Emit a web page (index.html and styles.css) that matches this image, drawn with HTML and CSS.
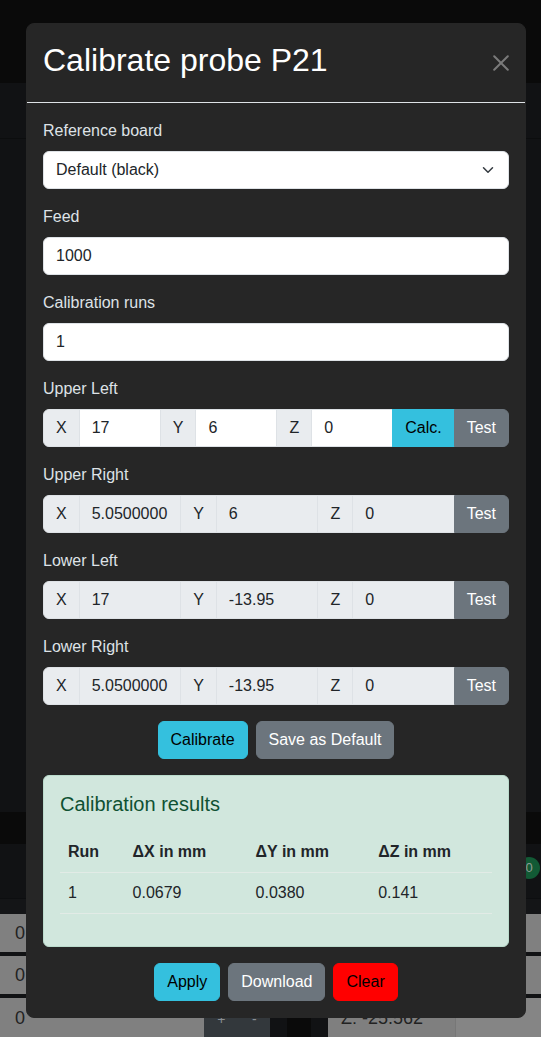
FILE: index.html
```html
<!DOCTYPE html>
<html lang="en">
<head>
<meta charset="utf-8">
<title>Calibrate probe P21</title>
<link rel="stylesheet" href="styles.css">
</head>
<body>
<div class="page">
  <div class="topbar"></div>
  <div class="navbar"></div>
  <div class="main"></div>
  <div class="band"></div>
  <div class="status"><span class="badge">0</span></div>
  <div class="sub"></div>
  <div class="rows">
    <div class="row"><span class="zero">0</span></div>
    <div class="row"><span class="zero">0</span></div>
    <div class="row row-last">
      <div class="cell-a"><span class="zero">0</span></div>
      <div class="pm"><span>+</span><span>-</span></div>
      <div class="gap"><div class="gap-inner"></div></div>
      <div class="zbox">Z: -25.562</div>
      <div class="cell-b"></div>
    </div>
  </div>
</div>

<div class="modal">
  <div class="dialog">
    <div class="mheader">
      <h5 class="mtitle">Calibrate probe P21</h5>
      <button class="close" type="button" aria-label="Close">
        <svg width="16" height="16" viewBox="0 0 16 16"><path d="M1.2 1.2 14.8 14.8M14.8 1.2 1.2 14.8" stroke="#7a7a7a" stroke-width="2" stroke-linecap="round" fill="none"/></svg>
      </button>
    </div>
    <div class="mbody">
      <div class="field">
        <label class="lbl">Reference board</label>
        <div class="select-wrap">
          <select class="ctl select"><option>Default (black)</option></select>
          <svg class="chev" width="12" height="12" viewBox="0 0 16 16"><path d="m2 5 6 6 6-6" fill="none" stroke="#343a40" stroke-width="2" stroke-linecap="round" stroke-linejoin="round"/></svg>
        </div>
      </div>
      <div class="field">
        <label class="lbl">Feed</label>
        <input class="ctl" value="1000">
      </div>
      <div class="field">
        <label class="lbl">Calibration runs</label>
        <input class="ctl" value="1">
      </div>
      <div class="field">
        <label class="lbl">Upper Left</label>
        <div class="ig">
          <span class="addon">X</span><input class="gin" value="17">
          <span class="addon">Y</span><input class="gin" value="6">
          <span class="addon">Z</span><input class="gin" value="0">
          <button class="gbtn info" type="button">Calc.</button>
          <button class="gbtn sec" type="button">Test</button>
        </div>
      </div>
      <div class="field">
        <label class="lbl">Upper Right</label>
        <div class="ig">
          <span class="addon">X</span><input class="gin ro" value="5.0500000" readonly>
          <span class="addon">Y</span><input class="gin ro" value="6" readonly>
          <span class="addon">Z</span><input class="gin ro" value="0" readonly>
          <button class="gbtn sec" type="button">Test</button>
        </div>
      </div>
      <div class="field">
        <label class="lbl">Lower Left</label>
        <div class="ig">
          <span class="addon">X</span><input class="gin ro" value="17" readonly>
          <span class="addon">Y</span><input class="gin ro" value="-13.95" readonly>
          <span class="addon">Z</span><input class="gin ro" value="0" readonly>
          <button class="gbtn sec" type="button">Test</button>
        </div>
      </div>
      <div class="field">
        <label class="lbl">Lower Right</label>
        <div class="ig">
          <span class="addon">X</span><input class="gin ro" value="5.0500000" readonly>
          <span class="addon">Y</span><input class="gin ro" value="-13.95" readonly>
          <span class="addon">Z</span><input class="gin ro" value="0" readonly>
          <button class="gbtn sec" type="button">Test</button>
        </div>
      </div>
      <div class="actions">
        <button class="btn info" type="button">Calibrate</button>
        <button class="btn sec" type="button">Save as Default</button>
      </div>
      <div class="alert">
        <h5 class="atitle">Calibration results</h5>
        <table class="results">
          <thead>
            <tr><th>Run</th><th>ΔX in mm</th><th>ΔY in mm</th><th>ΔZ in mm</th></tr>
          </thead>
          <tbody>
            <tr><td>1</td><td>0.0679</td><td>0.0380</td><td>0.141</td></tr>
          </tbody>
        </table>
      </div>
      <div class="actions last">
        <button class="btn info" type="button">Apply</button>
        <button class="btn sec" type="button">Download</button>
        <button class="btn danger" type="button">Clear</button>
      </div>
    </div>
  </div>
</div>
</body>
</html>
```

FILE: styles.css
```css
* { box-sizing: border-box; }

html, body {
  margin: 0;
  padding: 0;
  height: 100%;
  overflow: hidden;
}

body {
  background: #111214;
  font-family: "Liberation Sans", Arial, sans-serif;
  font-size: 16px;
  line-height: 24px;
  color: #dee2e6;
}

/* ---------- dimmed page behind the modal ---------- */
.page {
  display: flex;
  flex-direction: column;
}
.topbar { height: 83px; background: #0a0a0a; }
.navbar { height: 56px; background: #111214; border-bottom: 1px solid #0c0d0e; }
.main { height: 673px; background: #111214; }
.band { height: 32px; background: #0a0a0a; }
.status {
  height: 55px;
  background: #111214;
  display: flex;
  justify-content: flex-end;
  align-items: flex-start;
  padding: 13px 1px 0 0;
  border-bottom: 1px solid #0d0e10;
}
.badge {
  width: 22px;
  height: 22px;
  border-radius: 50%;
  background: #125a35;
  color: #8e9a94;
  font-size: 13px;
  line-height: 22px;
  text-align: center;
}
.sub { height: 15px; background: #141517; }
.rows {
  display: flex;
  flex-direction: column;
  gap: 4px;
  background: #111214;
}
.row {
  height: 38px;
  background: #808080;
  display: flex;
  align-items: center;
}
.zero {
  padding-left: 15px;
  font-size: 18px;
  color: #222;
}
.row-last { height: 40px; align-items: stretch; }
.cell-a { width: 204px; display: flex; align-items: center; }
.pm {
  width: 66px;
  background: #33383c;
  display: flex;
  justify-content: space-around;
  align-items: center;
  color: #8a8f94;
  font-size: 14px;
  padding-top: 2px;
}
.gap {
  width: 58px;
  background: #111214;
  padding: 0 17px;
  display: flex;
}
.gap-inner { flex: 1; background: #0a0a0a; }
.zbox {
  width: 127px;
  background: #7f7f7f;
  color: #222;
  font-size: 18px;
  padding-left: 13px;
  display: flex;
  align-items: center;
  border-top-left-radius: 4px;
}
.cell-b { flex: 1; background: #858585; border-left: 1px solid #777; }

/* ---------- modal ---------- */
.modal {
  position: fixed;
  inset: 0;
  display: flex;
  align-items: flex-start;
  padding: 23px 0 0 26px;
}
.dialog {
  width: 500px;
  background: #262626;
  border: 1px solid #262626;
  border-radius: 8px;
}
.mheader {
  display: flex;
  align-items: center;
  justify-content: space-between;
  padding: 16px;
  border-bottom: 1px solid #dee2e6;
}
.mtitle {
  margin: 0 0 6px;
  font-size: 32px;
  line-height: 40px;
  font-weight: 400;
  color: #fff;
}
.close {
  display: flex;
  padding: 0;
  border: 0;
  background: transparent;
  cursor: pointer;
}
.mbody { padding: 16px; }

.field { margin-bottom: 16px; }
.lbl {
  display: block;
  margin-bottom: 8px;
  color: #dee2e6;
}

.ctl {
  display: block;
  width: 100%;
  height: 38px;
  padding: 6px 12px;
  font: inherit;
  line-height: 24px;
  color: #212529;
  background: #fff;
  border: 1px solid #dee2e6;
  border-radius: 6px;
  outline: none;
}
.select-wrap { position: relative; }
.select {
  appearance: none;
  -webkit-appearance: none;
  padding-right: 36px;
}
.chev {
  position: absolute;
  right: 15px;
  top: 13px;
  pointer-events: none;
}

/* input groups */
.ig { display: flex; align-items: stretch; }
.ig > * + * { margin-left: -1px; }
.addon {
  display: flex;
  align-items: center;
  padding: 6px 12px;
  background: #e9ecef;
  border: 1px solid #dee2e6;
  color: #212529;
  white-space: nowrap;
}
.ig > :first-child {
  border-top-left-radius: 6px;
  border-bottom-left-radius: 6px;
}
.ig > :last-child {
  border-top-right-radius: 6px;
  border-bottom-right-radius: 6px;
}
.gin {
  flex: 1 1 auto;
  width: 1%;
  min-width: 0;
  height: 38px;
  padding: 6px 12px;
  font: inherit;
  line-height: 24px;
  color: #212529;
  background: #fff;
  border: 1px solid #dee2e6;
  border-radius: 0;
  outline: none;
}
.gin.ro { background: #e9ecef; }
.gbtn {
  padding: 6px 12px;
  font: inherit;
  line-height: 24px;
  border: 1px solid transparent;
  border-radius: 0;
  cursor: pointer;
}

/* buttons */
.btn {
  padding: 6px 12px;
  font: inherit;
  line-height: 24px;
  border: 1px solid transparent;
  border-radius: 6px;
  cursor: pointer;
}
.info { background: #34c0de; border-color: #34c0de; color: #000; }
.sec { background: #6c757d; border-color: #6c757d; color: #fff; }
.danger { background: #ff0000; border-color: #ff0000; color: #000; }

.actions {
  display: flex;
  justify-content: center;
  gap: 8px;
  margin-bottom: 16px;
}
.actions.last { margin-bottom: 0; }

/* results */
.alert {
  background: #d1e7dd;
  border: 1px solid #badbcc;
  border-radius: 6px;
  padding: 16px;
  margin-bottom: 16px;
  color: #0f5132;
}
.atitle {
  margin: 0 0 16px;
  font-size: 20px;
  line-height: 24px;
  font-weight: 400;
}
.results {
  width: 100%;
  border-collapse: collapse;
  margin-bottom: 16px;
  color: #212529;
}
.results th,
.results td {
  padding: 8px;
  text-align: left;
  line-height: 24px;
  border-bottom: 1px solid #e2ebe6;
}
.results th { font-weight: 700; }
```
